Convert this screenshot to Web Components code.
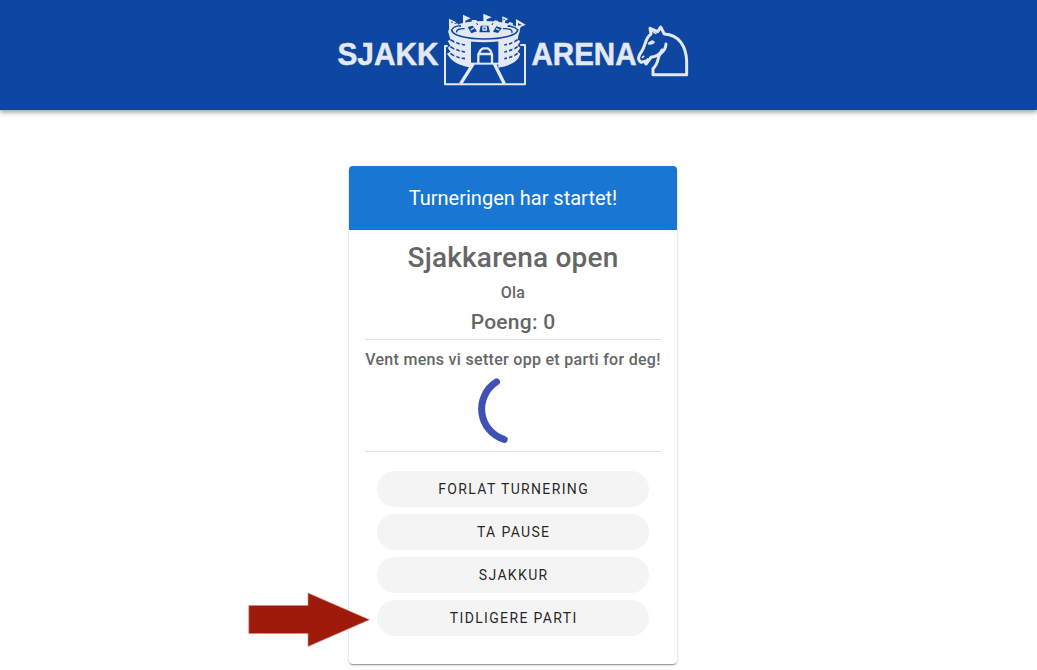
<!DOCTYPE html>
<html lang="no">
<head>
<meta charset="utf-8">
<title>Sjakkarena</title>
<style>
html,body{margin:0;height:100%;background:#fff;overflow:hidden;font-family:Roboto,"Liberation Sans",sans-serif}
</style>
</head>
<body>
<arena-page></arena-page>
<script>
const define = (name, markup) => {
  const t = document.createElement('template');
  t.innerHTML = markup;
  customElements.define(name, class extends HTMLElement {
    constructor() {
      super();
      this.attachShadow({mode: 'open'}).append(t.content.cloneNode(true));
    }
  });
};

define('arena-stadium', `
<style>:host{display:block;width:84px;height:74px}svg{display:block}</style>
<svg width="84" height="74" viewBox="24 24 252 222" fill="none" stroke="#e3e8f2" stroke-width="6" stroke-linejoin="round">
  <path d="M38 123H30V238H270V120H256"/>
  <path d="M115 176L77 236M178 176L208 236" stroke-width="10"/>
  <!-- outer walls -->
  <path d="M40 80L46 104L38 108L46 122L38 128L46 140L36 146L46 160C58 174 82 184 108 188V104H190V188C218 184 240 174 250 160L256 146L248 140L256 128L248 122L256 108L248 104L252 80Z" fill="#e3e8f2" stroke="none"/>
  <g stroke="#0d47a1" stroke-width="5">
    <path d="M46 104C60 114 74 118 90 120M46 125C58 134 72 138 90 141M46 145C58 154 72 159 90 161"/>
    <path d="M248 104C236 114 222 118 208 120M248 125C237 134 224 138 208 141M248 145C237 154 224 159 208 161"/>
  </g>
  <path d="M61 104V166M77 112V176M219 112V176M235 104V166" stroke-width="6"/>
  <!-- gate -->
  <path d="M112 126H188V173H112Z" fill="#0d47a1" stroke="none"/>
  <path d="M130 175V148L137 135L145 130H158L166 136L171 148V175M130 147H171" stroke-width="7"/>
  <path d="M108 176H192" stroke-width="6"/>
  <!-- battlements and flags -->
  <g fill="#e3e8f2" stroke="none">
    <path d="M42 78V41L64 52L55 58L67 55L70 60L84 57V29L107 40L91 47V54L110 51V45H125V50L145 49V26L170 37L155 43V50L174 51L180 46L190 48V52L202 54V34L220 42L210 48V55L219 56L224 51L234 55L233 61L243 65V42L272 59L257 66L251 83Z"/>
  </g>
  <path d="M49 49L55 52L49 55ZM205 41L212 43L205 46ZM249 54L261 60L249 62Z" fill="#0d47a1" stroke="none"/>
  <!-- stands -->
  <ellipse cx="147" cy="80" rx="107" ry="32" fill="#e3e8f2" stroke="none"/>
  <path d="M50 72C45 112 252 112 248 72" stroke="#0d47a1" stroke-width="5"/>
  <path d="M52 72C58 65 68 62 78 63M66 82C61 73 78 70 89 71M204 71C220 70 235 74 230 84M218 63C233 65 243 69 246 73" stroke="#0d47a1" stroke-width="4"/>
  <path d="M98 66L113 62L126 79L109 85ZM137 62H160L165 82H133ZM184 64L201 69L189 84L174 80Z" fill="#0d47a1" stroke="none"/>
  <path d="M107 75L117 69M144 66H154V75H144ZM183 71L193 75" stroke-width="4"/>
  <path d="M71 58L77 66M219 65L225 59M125 54L128 60M171 60L174 54" stroke="#0d47a1" stroke-width="3"/>
</svg>`);

define('arena-knight', `
<style>:host{display:block;width:54px;height:54px}svg{display:block}</style>
<svg width="54" height="54" viewBox="18 27 162 162" fill="none" stroke="#e3e8f2" stroke-width="9" stroke-linecap="round" stroke-linejoin="round">
  <path d="M108 87C107 103 101 109 93 115C80 123 90 142 69 161V179H170V140C169 94 147 59 103 57L92 36L83 50L60 40L63 57C43 72 48 91 35 109C24 124 22 134 33 142L43 139L48 147L63 127C76 125 90 119 96 105"/>
  <path d="M55 84L66 77L73 80C74 87 64 87 57 88Z" fill="#e3e8f2" stroke-width="3"/>
  <path d="M37 127L41 124M45 139L53 132" stroke-width="5"/>
  <path d="M65 48L78 56" stroke-width="4"/>
</svg>`);

customElements.define('arena-label', class extends HTMLElement {
  connectedCallback() {
    const width = this.getAttribute('width'), length = this.getAttribute('length'), start = this.getAttribute('start');
    this.attachShadow({mode: 'open'}).innerHTML = `
      <style>
      :host{display:block;width:${width}px;height:40px}
      svg{display:block;overflow:visible}
      text{font:bold 30.5px "Liberation Sans",Arial,sans-serif;fill:#e3e8f2;stroke:#e3e8f2;stroke-width:.5px}
      </style>
      <svg width="${width}" height="40"><text x="${start}" y="32" textLength="${length}" lengthAdjust="spacingAndGlyphs">${this.getAttribute('text')}</text></svg>`;
  }
});

define('arena-header', `
<style>
:host{display:flex;box-sizing:border-box;height:110px;padding:13px 0 0 337px;background:#0d47a1;box-shadow:0 2px 4px rgba(0,0,0,.28),0 4px 5px rgba(0,0,0,.1)}
arena-label{margin-top:20px}
arena-knight{margin-top:11px}
</style>
<arena-label text="SJAKK" width="106" length="101" start="0.5"></arena-label>
<arena-stadium></arena-stadium>
<arena-label text="ARENA" width="109" length="105" start="4.5"></arena-label>
<arena-knight></arena-knight>`);

define('arena-spinner', `
<style>:host{display:block;width:70px;height:70px;margin:3px 0 0 112px}svg{display:block}</style>
<svg width="70" height="70" viewBox="0 0 70 70"><path d="M18.8 7.4A32 32 0 0 0 26.5 65" transform="translate(.7 -.5)" fill="none" stroke="#3f51b5" stroke-width="7" stroke-linecap="round"/></svg>`);

define('arena-button', `
<style>
:host{display:block}
button{display:block;width:100%;height:36px;border:0;border-radius:18px;padding:0;background:#f4f4f4;color:rgba(0,0,0,.87);font:400 14px/36px Roboto,sans-serif;letter-spacing:1.35px;text-indent:1.35px;text-align:center}
</style><button><slot></slot></button>`);

define('arena-card', `
<style>
:host{display:flex;flex-direction:column;box-sizing:border-box;width:328px;height:498px;border-radius:4px;background:#fff;overflow:hidden;box-shadow:0 2px 1px -1px rgba(0,0,0,.2),0 1px 1px rgba(0,0,0,.14),0 1px 3px rgba(0,0,0,.2)}
header{height:64px;background:#1976d2;color:#fff;font-size:20px;line-height:64px;text-align:center}
section{margin:0 16px;text-align:center;color:#666;font-weight:500;border-bottom:1px solid #e0e0e0;box-sizing:border-box;white-space:nowrap}
.info{height:110px}
.wait{height:112px}
nav{display:flex;flex-direction:column;gap:7px;padding:19px 28px 0}
</style>
<header><slot name="title"></slot></header>
<section class="info"><slot name="info"></slot></section>
<section class="wait"><slot name="wait"></slot></section>
<nav><slot></slot></nav>`);

define('arena-text', `
<style>
:host{display:block;font-weight:500;font-size:16px;line-height:24px;letter-spacing:.3px}
:host([kind=name]){font-size:28px;line-height:32px;padding-top:12px;letter-spacing:.2px}
:host([kind=player]){line-height:24px;padding-top:7px}
:host([kind=score]){font-size:21px;line-height:28px;padding-top:3px;letter-spacing:.25px}
:host([kind=wait]){padding-top:8px}
</style><slot></slot>`);

define('arena-arrow', `
<style>:host{display:block;width:122px;height:56px}svg{display:block}</style>
<svg width="122" height="56"><path d="M.8 13.5H60V1L121.4 27.7L60 54.5V41.5H.8Z" fill="#a01a0c" stroke="#c98c85" stroke-width=".6"/></svg>`);

define('arena-page', `
<style>
:host{display:block;height:670px}
main{position:relative;width:328px;margin:56px 0 0 349px}
arena-arrow{position:absolute;left:-101px;top:426px}
</style>
<arena-header></arena-header>
<main>
  <arena-card>
    <span slot="title">Turneringen har startet!</span>
    <arena-text slot="info" kind="name">Sjakkarena open</arena-text>
    <arena-text slot="info" kind="player">Ola</arena-text>
    <arena-text slot="info" kind="score">Poeng: 0</arena-text>
    <arena-text slot="wait" kind="wait">Vent mens vi setter opp et parti for deg!</arena-text>
    <arena-spinner slot="wait"></arena-spinner>
    <arena-button>FORLAT TURNERING</arena-button>
    <arena-button>TA PAUSE</arena-button>
    <arena-button>SJAKKUR</arena-button>
    <arena-button>TIDLIGERE PARTI</arena-button>
  </arena-card>
  <arena-arrow></arena-arrow>
</main>`);
</script>
</body>
</html>
